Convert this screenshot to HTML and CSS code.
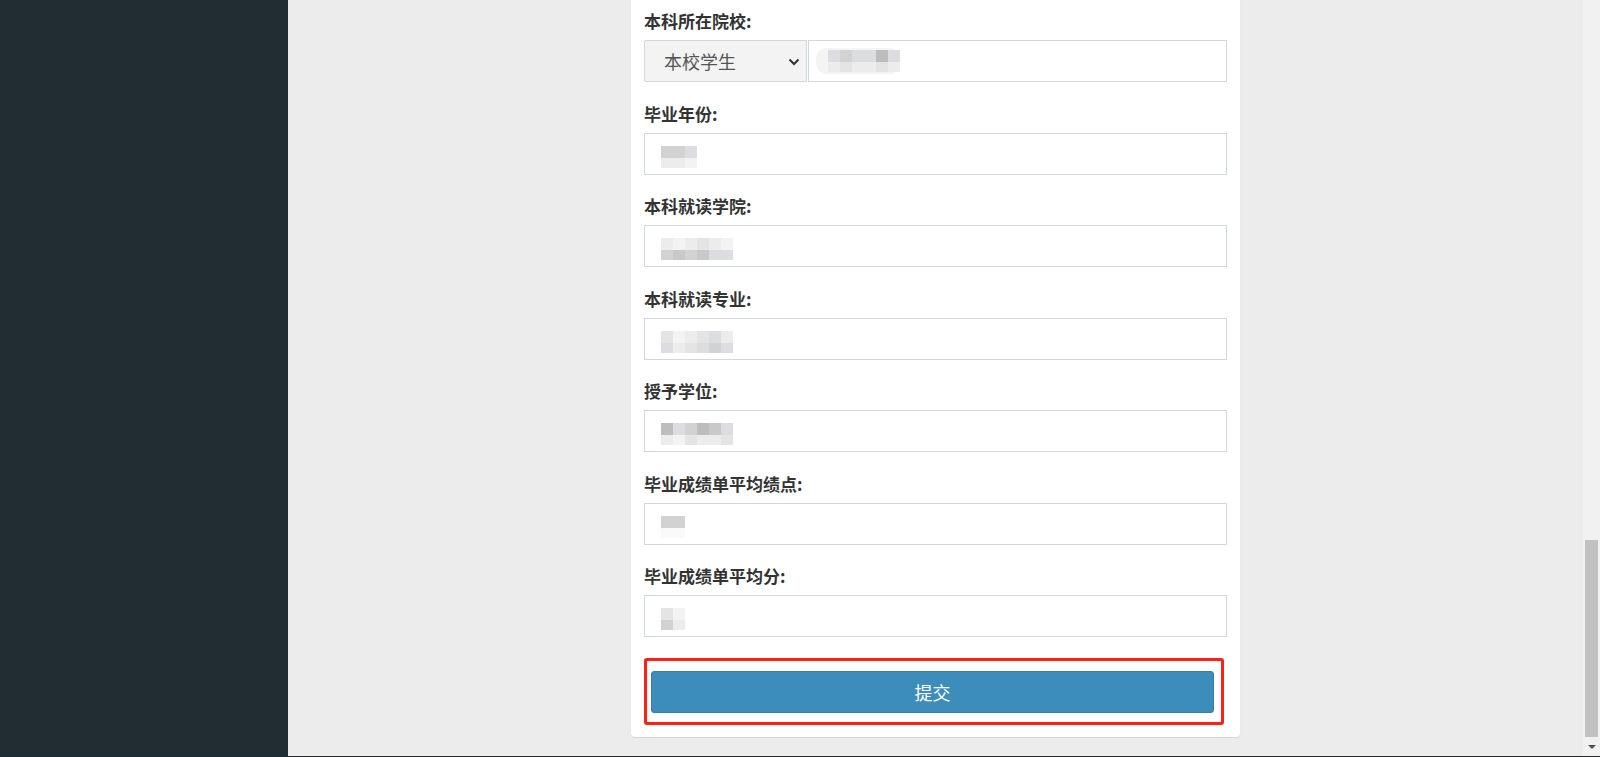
FILE: index.html
```html
<!DOCTYPE html>
<html lang="zh-CN">
<head>
    <meta charset="UTF-8">
    <meta name="viewport" content="width=device-width, initial-scale=1.0">
    <title>本科信息</title>
    <link rel="stylesheet" href="styles.css">
</head>
<body>
    <aside class="sidebar"></aside>

    <main class="content">
        <div class="card">
            <div class="group">
                <label class="field-label">本科所在院校:</label>
                <div class="select-row">
                    <div class="select">
                        <span>本校学生</span>
                        <svg class="chevron" width="12" height="8" viewBox="0 0 12 8"><path d="M1.5 1.5 L6 6 L10.5 1.5" fill="none" stroke="#333" stroke-width="2"/></svg>
                    </div>
                    <div class="input input-wide">
                        <span class="mosaic pill">
                            <i class="m4"></i><i class="m6"></i>
                            <i class="m3"></i><i class="m5"></i>
                            <i class="m4"></i><i class="m6"></i>
                            <i class="m4"></i><i class="m6"></i>
                            <i class="m1"></i><i class="m5"></i>
                            <i class="m4"></i><i class="m6"></i>
                        </span>
                    </div>
                </div>
            </div>

            <div class="group">
                <label class="field-label">毕业年份:</label>
                <div class="input">
                    <span class="mosaic">
                        <i class="m3"></i><i class="m6"></i>
                        <i class="m3"></i><i class="m6"></i>
                        <i class="m4"></i><i class="m7"></i>
                    </span>
                </div>
            </div>

            <div class="group">
                <label class="field-label">本科就读学院:</label>
                <div class="input">
                    <span class="mosaic">
                        <i class="m6"></i><i class="m3"></i>
                        <i class="m7"></i><i class="m2"></i>
                        <i class="m6"></i><i class="m3"></i>
                        <i class="m5"></i><i class="m2"></i>
                        <i class="m6"></i><i class="m4"></i>
                        <i class="m7"></i><i class="m4"></i>
                    </span>
                </div>
            </div>

            <div class="group">
                <label class="field-label">本科就读专业:</label>
                <div class="input">
                    <span class="mosaic">
                        <i class="m5"></i><i class="m4"></i>
                        <i class="m7"></i><i class="m6"></i>
                        <i class="m6"></i><i class="m5"></i>
                        <i class="m5"></i><i class="m4"></i>
                        <i class="m4"></i><i class="m3"></i>
                        <i class="m6"></i><i class="m4"></i>
                    </span>
                </div>
            </div>

            <div class="group">
                <label class="field-label">授予学位:</label>
                <div class="input">
                    <span class="mosaic">
                        <i class="m1"></i><i class="m6"></i>
                        <i class="m4"></i><i class="m7"></i>
                        <i class="m3"></i><i class="m5"></i>
                        <i class="m1"></i><i class="m6"></i>
                        <i class="m2"></i><i class="m6"></i>
                        <i class="m4"></i><i class="m5"></i>
                    </span>
                </div>
            </div>

            <div class="group">
                <label class="field-label">毕业成绩单平均绩点:</label>
                <div class="input">
                    <span class="mosaic">
                        <i class="m3"></i><i class="m8"></i>
                        <i class="m3"></i><i class="m8"></i>
                    </span>
                </div>
            </div>

            <div class="group">
                <label class="field-label">毕业成绩单平均分:</label>
                <div class="input">
                    <span class="mosaic">
                        <i class="m5"></i><i class="m3"></i>
                        <i class="m7"></i><i class="m6"></i>
                    </span>
                </div>
            </div>

            <div class="highlight">
                <button class="btn-primary">提交</button>
            </div>
        </div>
    </main>

    <div class="scrollbar">
        <div class="thumb"></div>
        <div class="arrow-down"></div>
    </div>
</body>
</html>
```

FILE: styles.css
```css
html, body { margin: 0; padding: 0; }
body {
    display: flex;
    height: 756px;
    overflow: hidden;
    border-bottom: 1px solid #1f2b32;
    font-family: "Liberation Sans", "Noto Sans CJK SC", sans-serif;
    color: #333;
    background: #ececec;
}

.sidebar { width: 288px; flex-shrink: 0; background: #222d32; }

.content { flex: 1; overflow: hidden; }

.card {
    width: 583px;
    margin: 0 auto;
    padding: 10px 13px 12px 13px;
    background: #fff;
    border-radius: 0 0 4px 4px;
    box-shadow: 0 1px 1px rgba(0, 0, 0, 0.1);
}

.group { margin-bottom: 20.5px; }

.field-label {
    display: block;
    margin-bottom: 8px;
    font-family: "Noto Sans CJK SC", sans-serif;
    font-weight: 700;
    font-size: 17px;
    line-height: 22px;
    color: #333;
}

.input {
    height: 42px;
    box-sizing: border-box;
    border: 1px solid #d2d6de;
    background: #fff;
    display: flex;
    align-items: center;
    padding-left: 12px;
}

.select-row { display: flex; gap: 1px; }
.select {
    width: 163px;
    height: 42px;
    box-sizing: border-box;
    border: 1px solid #d2d6de;
    border-radius: 2px 0 0 2px;
    background: #f3f3f3;
    display: flex;
    align-items: center;
    justify-content: space-between;
    padding: 0 6px 0 19px;
    font-family: "Noto Sans CJK SC", sans-serif;
    font-size: 18px;
    color: #555;
}
.chevron { margin-top: 1px; }
.input-wide { flex: 1; padding-left: 7px; }

.mosaic {
    display: grid;
    grid-auto-flow: column;
    grid-template-rows: 12px 10px;
    grid-auto-columns: 12px;
    margin-top: 6px;
    padding-left: 4px;
    border-radius: 11px;
    background: linear-gradient(to right, #fbfbfb, #fff 4px);
}
.mosaic.pill {
    margin-top: 0;
    padding: 2px 0 2px 12px;
    background: #f4f4f4;
}
.mosaic i { display: block; }
.m1 { background: #bdbdbd; }
.m2 { background: #c9c9c9; }
.m3 { background: #d2d2d2; }
.m4 { background: #dcdde0; }
.m5 { background: #e4e4e4; }
.m6 { background: #ececec; }
.m7 { background: #f3f3f3; }
.m8 { background: #fafafa; }

.highlight {
    margin-right: 3px;
    border: 3px solid #ff2116;
    border-radius: 3px;
    padding: 10px 7px 9px 4px;
}

.btn-primary {
    display: block;
    width: 100%;
    height: 42px;
    border: 1px solid #367fa9;
    border-radius: 3px;
    background: #3c8dbc;
    color: #fff;
    font-family: "Noto Sans CJK SC", sans-serif;
    font-size: 18px;
    cursor: pointer;
}

.scrollbar {
    width: 17px;
    flex-shrink: 0;
    background: #f1f1f1;
    display: flex;
    flex-direction: column;
    justify-content: flex-end;
    align-items: center;
}
.thumb { width: 13px; height: 197px; background: #c1c1c1; }
.arrow-down {
    width: 0;
    height: 0;
    margin: 8px 0 7px;
    border-left: 4px solid transparent;
    border-right: 4px solid transparent;
    border-top: 4px solid #505050;
}
```
